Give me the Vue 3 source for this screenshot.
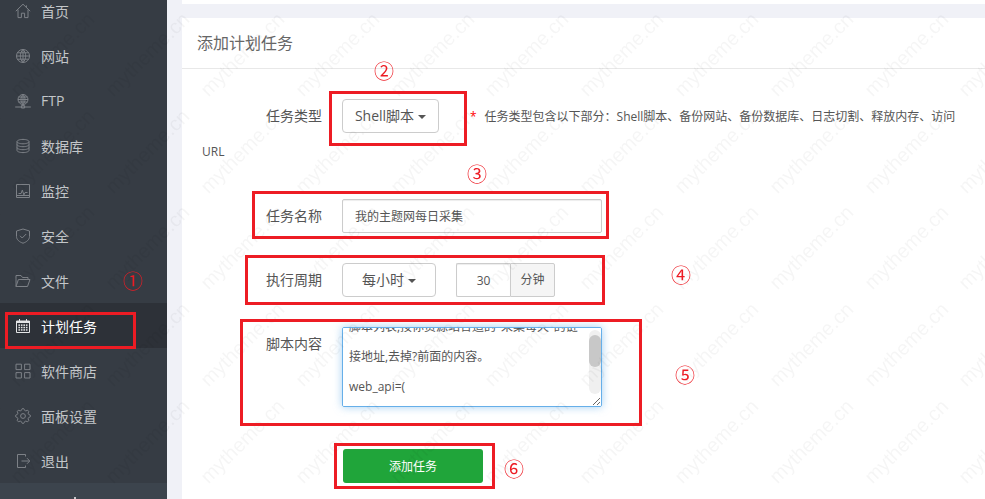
<script setup>
import { onMounted, ref } from 'vue'

const gearPath = () => {
  const pts = []
  for (let i = 0; i < 32; i++) {
    const r = [7.4, 7.4, 5.8, 5.8][i % 4]
    const a = ((i - 0.5) * Math.PI) / 16
    pts.push(`${(8 + r * Math.cos(a)).toFixed(2)} ${(8 + r * Math.sin(a)).toFixed(2)}`)
  }
  return `M${pts.join('L')}Z M10.4 8a2.4 2.4 0 1 1-4.8 0a2.4 2.4 0 1 1 4.8 0`
}

const globe = 'M14.5 8a6.5 6.5 0 1 1-13 0a6.5 6.5 0 1 1 13 0M1.5 8h13M2.4 4.8h11.2M2.4 11.2h11.2M8 1.5v13M8 1.5c-3.6 3.6-3.6 9.4 0 13M8 1.5c3.6 3.6 3.6 9.4 0 13'

const menu = [
  { name: '首页', d: 'M.8 8.2 8 1.2l7.2 7M3 6.6v8h3.4v-4.4h3.2v4.4H13v-8M11.4 2.4v2' },
  { name: '网站', d: globe },
  { name: 'FTP', d: 'M13 6.5a5 5 0 1 1-10 0a5 5 0 1 1 10 0M3 6.5h10M3.6 4h8.8M3.6 9h8.8M8 1.5v10M8 1.5c-2.7 2.8-2.7 7.2 0 10M8 1.5c2.7 2.8 2.7 7.2 0 10M.2 14h15.6M6.4 12.6h3.2v2.4H6.4z' },
  { name: '数据库', d: 'M14 3.6c0 1.2-2.7 2.2-6 2.2s-6-1-6-2.2 2.7-2.2 6-2.2 6 1 6 2.2ZM2 3.6v8.8c0 1.2 2.7 2.2 6 2.2s6-1 6-2.2V3.6M2 6.5c0 1.2 2.7 2.2 6 2.2s6-1 6-2.2M2 9.5c0 1.2 2.7 2.2 6 2.2s6-1 6-2.2' },
  { name: '监控', d: 'M1.5 1.5h13v13h-13zM3.5 10.5h2.6l1.2-3.4 1.6 4.8 1.2-2.4h2.4M1.5 12.5h13' },
  { name: '安全', d: 'M8 1 14.5 3v5.4c0 3.4-3 5.6-6.5 6.8-3.5-1.2-6.5-3.4-6.5-6.8V3ZM5 7.8l2.2 2.2 4-4' },
  { name: '文件', d: 'M1 13.5v-11h5l1.5 2h5.5v2M1 13.5h11.5L15 6.5H3.4L1 13.5Z' },
  { name: '计划任务', active: true, d: 'M1.5 3h13v11.5h-13zM4.5 1v3M11.5 1v3', grid: true },
  { name: '软件商店', d: 'M1 1.2h5.4v5.4H1zM9.6 1.2H15v5.4H9.6zM1 9.6h5.4V15H1zM9.6 9.6H15V15H9.6z', round: true },
  { name: '面板设置', d: gearPath() },
  { name: '退出', d: 'M10.5 3.5v-2h-8v13h8v-2M6.5 8h8M12 5.2 14.8 8 12 10.8' }
]

const calendarDots = []
for (let y = 0; y < 3; y++) {
  for (let x = 0; x < 4; x++) calendarDots.push({ x: 3.4 + x * 2.5, y: 6.4 + y * 2.4 })
}

// red marks somebody drew over the screenshot
const boxes = [
  { x: 5, y: 312, w: 131, h: 37 },
  { x: 329, y: 91, w: 138, h: 55 },
  { x: 252, y: 191, w: 357, h: 48 },
  { x: 245, y: 255, w: 360, h: 50 },
  { x: 240, y: 319, w: 402, h: 107 },
  { x: 334, y: 443, w: 161, h: 46 }
]
const numbers = [
  { t: '①', x: 133, y: 281 },
  { t: '②', x: 384, y: 71 },
  { t: '③', x: 477, y: 174 },
  { t: '④', x: 681, y: 275 },
  { t: '⑤', x: 685, y: 375 },
  { t: '⑥', x: 514, y: 469 }
]

const script = ref(null)
const scriptText = `脚本列表,按你资源站合适的"采集每天"的链接地址,去掉?前面的内容。
web_api=(
'https://example.cn/api/day'
)
`

onMounted(() => {
  script.value.scrollTop = 22
})
</script>

<template>
  <div class="page">
    <aside class="sidebar">
      <ul class="menu">
        <li v-for="item in menu" :key="item.name" class="menu-item" :class="{ active: item.active }">
          <svg class="menu-icon" width="16" height="16" viewBox="0 0 16 16" fill="none">
            <path :d="item.d" stroke="currentColor" stroke-width="1" :stroke-linejoin="item.round ? 'round' : 'miter'" />
            <template v-if="item.grid">
              <rect x="1.5" y="3" width="13" height="2" fill="currentColor" />
              <rect v-for="(p, i) in calendarDots" :key="i" :x="p.x" :y="p.y" width="1.6" height="1.5" fill="currentColor" />
            </template>
          </svg>
          <span>{{ item.name }}</span>
        </li>
      </ul>
      <div class="sidebar-foot"><i></i></div>
    </aside>

    <main class="main">
      <div class="top-stub"></div>
      <section class="card">
        <h2 class="card-title">添加计划任务</h2>
        <div class="form">
          <div class="line line-type">
            <span class="tname">任务类型</span>
            <button class="drop">Shell脚本<i class="caret"></i></button>
            <span class="note"><em>*</em>任务类型包含以下部分：Shell脚本、备份网站、备份数据库、日志切割、释放内存、访问URL</span>
          </div>
          <div class="line">
            <span class="tname">任务名称</span>
            <input class="field name-field" value="我的主题网每日采集" />
          </div>
          <div class="line">
            <span class="tname">执行周期</span>
            <button class="drop period">每小时<i class="caret"></i></button>
            <div class="group">
              <input class="field minute" value="30" />
              <span class="addon">分钟</span>
            </div>
          </div>
          <div class="line line-script">
            <span class="tname">脚本内容</span>
            <div class="script-wrap">
              <textarea ref="script" class="script" :value="scriptText"></textarea>
              <div class="script-track"><div class="script-thumb"></div></div>
            </div>
          </div>
          <button class="submit">添加任务</button>
        </div>
      </section>
    </main>

    <div class="watermarks">
      <span v-for="n in 91" :key="n">mytheme.cn</span>
    </div>

    <div
      v-for="b in boxes"
      :key="b.x"
      class="mark-box"
      :style="{ left: b.x + 'px', top: b.y + 'px', width: b.w + 'px', height: b.h + 'px' }"
    ></div>
    <span
      v-for="m in numbers"
      :key="m.t"
      class="mark-num"
      :style="{ left: m.x + 'px', top: m.y + 'px' }"
    >{{ m.t }}</span>
  </div>
</template>

<style>
html,
body {
  margin: 0;
  overflow: hidden;
  background: #fff;
}
</style>

<style scoped>
.page {
  position: relative;
  display: flex;
  height: 499px;
  overflow: hidden;
  font-family: "Open Sans", "Noto Sans CJK SC", sans-serif;
  font-size: 14px;
  color: #555;
}

/* Sidebar */
.sidebar {
  display: flex;
  flex-direction: column;
  flex: 0 0 167px;
  background: #363c44;
  overflow: hidden;
}

.menu {
  list-style: none;
  margin: -12px 0 0;
  padding: 0;
}

.menu-item {
  display: flex;
  align-items: center;
  gap: 10px;
  height: 45px;
  padding-left: 15px;
  color: #c3c6c9;
}

.menu-icon {
  flex: none;
  color: #7d8187;
}

.menu-item.active {
  background: #2d3138;
  color: #fff;
}

.menu-item.active .menu-icon {
  color: #e4e5e7;
}

.sidebar-foot {
  flex: 1;
  position: relative;
  background: #3c444d;
}

.sidebar-foot i {
  position: absolute;
  left: 74px;
  bottom: 0;
  width: 2px;
  height: 2px;
  background: #c3c6c9;
}

/* Main */
.main {
  flex: 1;
  min-width: 0;
  padding-left: 15px;
  background: #f0f1f7;
}

.top-stub {
  height: 4px;
  background: #fff;
}

.card {
  height: 100%;
  margin-top: 14px;
  background: #fff;
}

.card-title {
  height: 50px;
  margin: 0;
  padding-left: 15px;
  border-bottom: 1px solid #e8e8e8;
  font-size: 16px;
  font-weight: 400;
  line-height: 50px;
  color: #666;
}

.form {
  padding: 30px 15px 0 20px;
}

.line {
  display: flex;
  align-items: flex-start;
  margin-bottom: 30px;
}

.line-type {
  display: block;
  line-height: 34px;
}

.tname {
  display: inline-block;
  width: 120px;
  margin-right: 20px;
  text-align: right;
  line-height: 34px;
}

.drop {
  display: inline-block;
  width: 97px;
  height: 34px;
  padding: 0;
  border: 1px solid #ccc;
  border-radius: 4px;
  background: #fff;
  font: inherit;
  line-height: 32px;
  color: #555;
  vertical-align: top;
}

.drop.period {
  width: 94px;
}

.caret {
  display: inline-block;
  margin-left: 4px;
  border-top: 4px solid #555;
  border-left: 4px solid transparent;
  border-right: 4px solid transparent;
  vertical-align: middle;
}

.note {
  margin-left: 31px;
  font-size: 12px;
}

.note em {
  margin-right: 8px;
  font-style: normal;
  color: #f00;
}

.field {
  box-sizing: border-box;
  height: 34px;
  padding: 0 12px;
  border: 1px solid #ccc;
  border-radius: 2px;
  box-shadow: inset 0 1px 1px rgba(0, 0, 0, 0.075);
  font: inherit;
  font-size: 12px;
  color: #555;
  outline: none;
}

.name-field {
  width: 260px;
}

.group {
  display: flex;
  margin-left: 20px;
}

.minute {
  width: 54px;
  border-right: 0;
  border-radius: 2px 0 0 2px;
  text-align: center;
}

.addon {
  box-sizing: border-box;
  width: 45px;
  height: 34px;
  border: 1px solid #ccc;
  border-radius: 0 2px 2px 0;
  background: #f5f5f5;
  font-size: 12px;
  line-height: 32px;
  text-align: center;
}

.line-script {
  margin-bottom: 42px;
}

.script-wrap {
  position: relative;
  width: 260px;
  height: 80px;
}

.script {
  display: block;
  box-sizing: border-box;
  width: 260px;
  height: 80px;
  margin: 0;
  padding: 6px 14px 6px 6px;
  border: 1px solid #66afe9;
  border-radius: 2px;
  box-shadow: 0 0 8px rgba(102, 175, 233, 0.6);
  font: inherit;
  font-size: 12px;
  line-height: 30px;
  color: #555;
  outline: none;
}

.script-track {
  position: absolute;
  top: 3px;
  right: 1px;
  width: 12px;
  height: 64px;
  border-radius: 6px;
  background: #f0f0f0;
  pointer-events: none;
}

.script-thumb {
  height: 32px;
  margin-top: 5px;
  border-radius: 6px;
  background: #c8c8c8;
}

.submit {
  display: block;
  width: 140px;
  height: 34px;
  margin-left: 141px;
  padding: 0;
  border: 0;
  border-radius: 3px;
  background: #20a53a;
  font: inherit;
  font-size: 12px;
  color: #fff;
}

/* Overlays */
.watermarks {
  position: absolute;
  left: -89.3px;
  top: -90.9px;
  display: grid;
  grid-template-columns: repeat(13, 94.8px);
  grid-auto-rows: 96.8px;
  pointer-events: none;
}

.watermarks span {
  align-self: center;
  justify-self: center;
  white-space: nowrap;
  transform: rotate(-45deg);
  font-family: "Liberation Sans", sans-serif;
  font-size: 20px;
  color: rgba(0, 0, 0, 0.04);
}

.mark-box {
  position: absolute;
  box-sizing: border-box;
  border: 3px solid #ed1c24;
  pointer-events: none;
}

.mark-num {
  position: absolute;
  transform: translate(-50%, -50%);
  font-family: "Noto Sans CJK SC", sans-serif;
  font-size: 20px;
  line-height: 1;
  color: #ed1c24;
}
</style>
